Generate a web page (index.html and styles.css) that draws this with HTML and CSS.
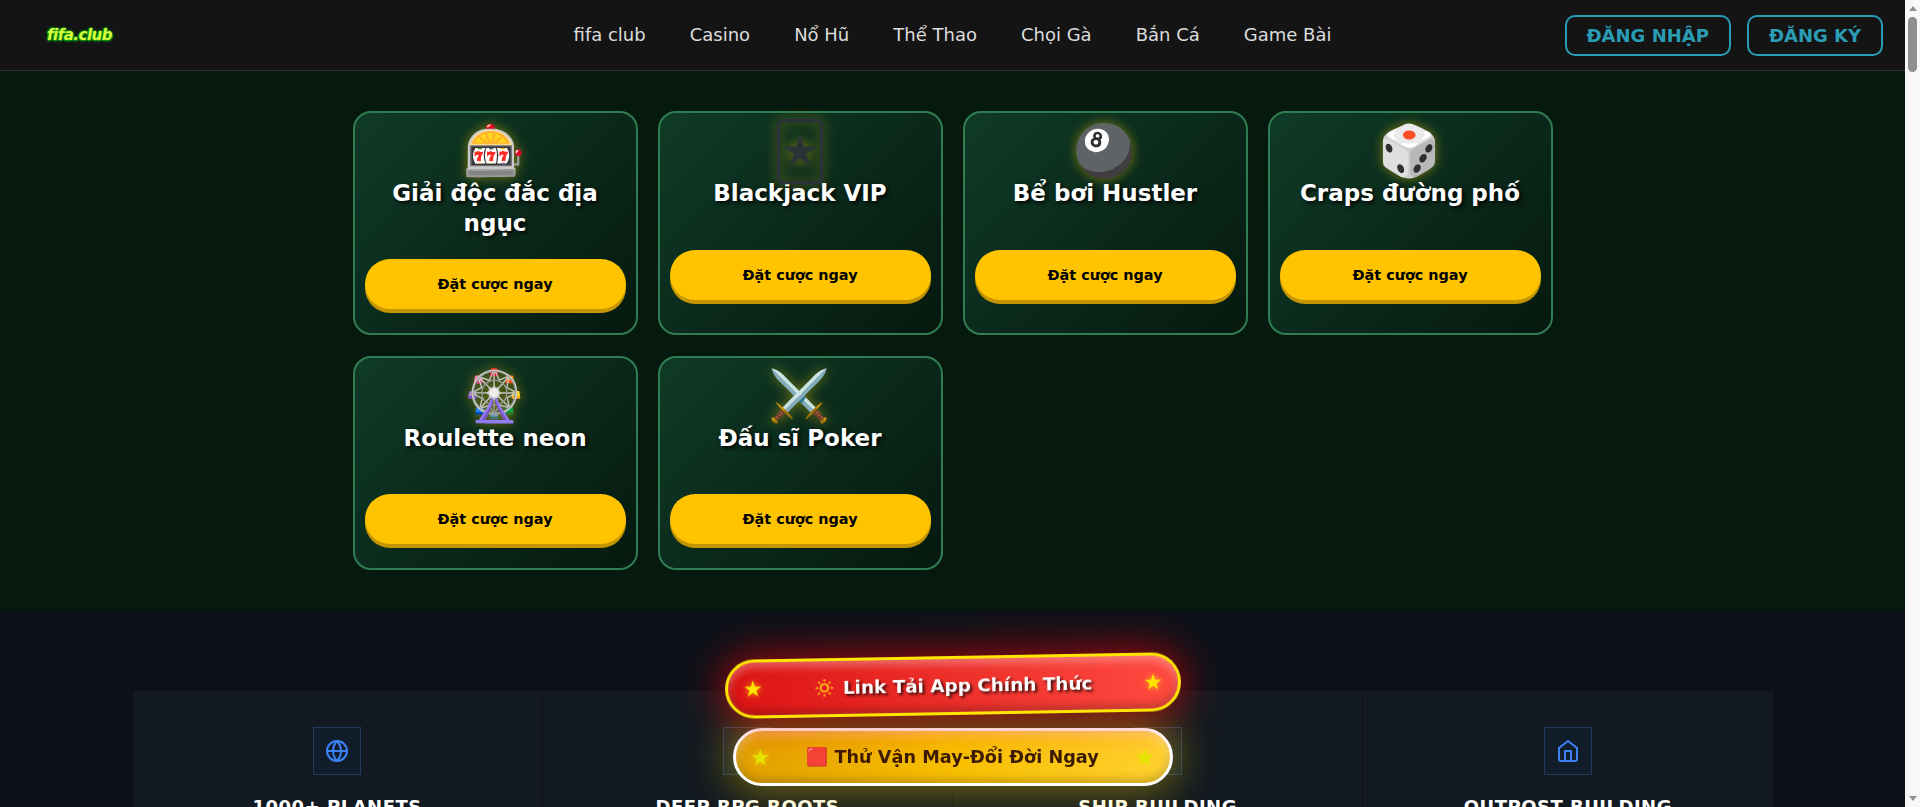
FILE: index.html
```html
<!DOCTYPE html>
<html lang="vi">
<head>
<meta charset="utf-8">
<title>fifa club</title>
<link rel="stylesheet" href="styles.css">
</head>
<body>
<header class="topbar">
  <a class="logo" href="#">fifa.club</a>
  <nav class="nav">
    <a href="#">fifa club</a><a href="#">Casino</a><a href="#">Nổ Hũ</a><a href="#">Thể Thao</a><a href="#">Chọi Gà</a><a href="#">Bắn Cá</a><a href="#">Game Bài</a>
  </nav>
  <div class="auth">
    <a class="auth-btn" href="#">ĐĂNG NHẬP</a>
    <a class="auth-btn" href="#">ĐĂNG KÝ</a>
  </div>
</header>

<section class="games">
  <div class="game-grid">
    <article class="card"><div class="card-icon">🎰</div><h3 class="card-title">Giải độc đắc địa ngục</h3><a class="bet" href="#">Đặt cược ngay</a></article>
    <article class="card"><div class="card-icon card-icon-glyph">🃏</div><h3 class="card-title">Blackjack VIP</h3><a class="bet" href="#">Đặt cược ngay</a></article>
    <article class="card"><div class="card-icon">🎱</div><h3 class="card-title">Bể bơi Hustler</h3><a class="bet" href="#">Đặt cược ngay</a></article>
    <article class="card"><div class="card-icon">🎲</div><h3 class="card-title">Craps đường phố</h3><a class="bet" href="#">Đặt cược ngay</a></article>
    <article class="card"><div class="card-icon">🎡</div><h3 class="card-title">Roulette neon</h3><a class="bet" href="#">Đặt cược ngay</a></article>
    <article class="card"><div class="card-icon">⚔️</div><h3 class="card-title">Đấu sĩ Poker</h3><a class="bet" href="#">Đặt cược ngay</a></article>
  </div>
</section>

<section class="features">
  <div class="feature-grid">
    <div class="feature">
      <div class="feature-icon"><svg viewBox="0 0 24 24"><circle cx="12" cy="12" r="10"/><path d="M2 12h20"/><path d="M12 2a15.3 15.3 0 0 1 4 10 15.3 15.3 0 0 1-4 10 15.3 15.3 0 0 1-4-10 15.3 15.3 0 0 1 4-10z"/></svg></div>
      <h4 class="feature-title">1000+ PLANETS</h4>
    </div>
    <div class="feature">
      <div class="feature-icon"><svg viewBox="0 0 24 24"><path d="M4 19.5A2.5 2.5 0 0 1 6.5 17H20V2H6.500A2.500 2.500 0 0 0 4 4.500z"/></svg></div>
      <h4 class="feature-title">DEEP RPG ROOTS</h4>
    </div>
    <div class="feature">
      <div class="feature-icon"><svg viewBox="0 0 24 24"><path d="M12 2l4 8v8H8v-8z"/></svg></div>
      <h4 class="feature-title">SHIP BUILDING</h4>
    </div>
    <div class="feature">
      <div class="feature-icon"><svg viewBox="0 0 24 24"><path d="M3 9l9-7 9 7v11a2 2 0 0 1-2 2H5a2 2 0 0 1-2-2z"/><path d="M9 22V12h6v10"/></svg></div>
      <h4 class="feature-title">OUTPOST BUILDING</h4>
    </div>
  </div>
</section>

<div class="float-cta">
  <a class="cta cta-red" href="#"><span class="star">★</span><span class="cta-text"><span class="cta-emoji">🔅</span> Link Tải App Chính Thức</span><span class="star">★</span></a>
  <a class="cta cta-gold" href="#"><span class="star">★</span><span class="cta-text"><span class="cta-emoji">🟥</span> Thử Vận May-Đổi Đời Ngay</span><span class="star">★</span></a>
</div>

<aside class="scrollbar" aria-hidden="true">
  <span class="arrow arrow-up"></span>
  <span class="track"><span class="thumb"></span></span>
  <span class="arrow arrow-down"></span>
</aside>
</body>
</html>
```

FILE: styles.css
```css
* { box-sizing: border-box; }
html, body { margin: 0; padding: 0; }
html { overflow: hidden; height: 100%; background: #0c1018; }
body {
  width: 1905px;
  height: 100%;
  overflow: hidden;
  font-family: "DejaVu Sans", "Noto Color Emoji", sans-serif;
  background: #0c1018;
  color: #fff;
}
a { text-decoration: none; color: inherit; }

.topbar {
  display: grid;
  grid-template-columns: 1fr auto 1fr;
  align-items: center;
  height: 71px;
  padding: 0 22px;
  background: #141414;
  border-bottom: 1px solid #2c2f2c;
}
.logo {
  justify-self: start;
  margin-left: 25px;
  font-size: 15px;
  font-weight: 700;
  font-style: italic;
  letter-spacing: -0.5px;
  color: #d8ff3a;
  text-shadow: 1px 1px 0 #0a8a12, -1px 0 0 #0a8a12, 0 -1px 0 #0a6a12, 0 1px 2px #13c41c, 0 0 3px #0ca014;
}
.nav { display: flex; gap: 44px; margin-bottom: 2px; font-size: 18px; color: #dcdcdc; }
.auth { justify-self: end; display: flex; gap: 16px; }
.auth-btn {
  display: flex;
  align-items: center;
  height: 41px;
  padding: 0 20px;
  border: 2px solid #2a9db5;
  border-radius: 10px;
  color: #2a9db5;
  font-size: 18px;
  font-weight: 700;
}

.games {
  padding: 40px 0 41px;
  background: #05190f;
}
.game-grid {
  display: grid;
  grid-template-columns: repeat(4, 1fr);
  gap: 20.6px 20px;
  width: 1200px;
  margin: 0 auto;
}
.card {
  display: flex;
  flex-direction: column;
  padding: 10px 10px 24px;
  border: 2px solid #2f7d50;
  border-radius: 18px;
  background: linear-gradient(135deg, #0f3b27 0%, #06190f 100%);
  text-align: center;
}
.card-icon {
  height: 55px;
  font-size: 50px;
  line-height: 57px;
  filter: drop-shadow(0 0 6px rgba(255, 215, 0, .45));
}
.card-icon-glyph { color: #2b3238; font-size: 56px; }
.card-title {
  min-height: 50.5px;
  margin: 0 0 21px;
  font-size: 23px;
  line-height: 30px;
  font-weight: 700;
  text-shadow: 2px 2px 4px #000;
}
.bet {
  display: flex;
  align-items: center;
  justify-content: center;
  height: 50px;
  border-radius: 25px;
  background: #ffc300;
  color: #000;
  font-size: 14.4px;
  font-weight: 700;
  box-shadow: 0 4px 0 #c49500;
}

.features { padding: 80px 0 80px; background: #0c1018; }
.feature-grid {
  display: grid;
  grid-template-columns: repeat(4, 1fr);
  gap: 1px;
  width: 1640px;
  margin: 0 auto;
  background: #0d1117;
}
.feature {
  display: flex;
  flex-direction: column;
  align-items: center;
  height: 300px;
  padding-top: 36px;
  background: #121920;
}
.feature-icon {
  display: flex;
  align-items: center;
  justify-content: center;
  width: 48px;
  height: 48px;
  border: 1px solid #223a5c;
  background: #121d2c;
}
.feature-icon svg {
  width: 24px;
  height: 24px;
  fill: none;
  stroke: #3b82f6;
  stroke-width: 2;
  stroke-linecap: round;
  stroke-linejoin: round;
}
.feature-title {
  margin: 20px 0 0;
  font-size: 18px;
  line-height: 24px;
  font-weight: 700;
  letter-spacing: .5px;
}

.float-cta {
  position: fixed;
  left: 0;
  top: 653px;
  width: 1905px;
  display: flex;
  flex-direction: column;
  align-items: center;
  gap: 13px;
}
.cta {
  display: flex;
  align-items: center;
  justify-content: space-between;
  border-radius: 30px;
  font-weight: 700;
}
.cta-red {
  width: 456px;
  height: 59px;
  padding: 0 15px;
  margin-top: 3px;
  transform: rotate(-1deg);
  border: 3px solid #ffe600;
  background: linear-gradient(90deg, #dc1414, #ff4a40);
  box-shadow: 0 0 40px 4px rgba(255, 0, 0, .6), inset 0 5px 8px rgba(255, 255, 255, .32), inset 0 -4px 8px rgba(0, 0, 0, .25);
  color: #fff;
  font-size: 18.4px;
  text-shadow: 2px 2px 3px rgba(0, 0, 0, .8);
}
.cta-gold {
  width: 440px;
  height: 58px;
  padding: 0 15px;
  border: 3px solid #fff;
  background: linear-gradient(90deg, #e0a000, #f8c000 50%, #ffd030);
  box-shadow: 0 0 40px 6px rgba(255, 215, 0, .42), inset 0 5px 8px rgba(255, 255, 255, .32), inset 0 -4px 8px rgba(0, 0, 0, .2);
  color: #3a1a00;
  font-size: 17.7px;
}
.star { color: #ffe600; font-size: 22px; text-shadow: 0 0 6px rgba(255, 230, 0, .7); }
.cta-gold .star { color: #e2e800; }
.cta-text { white-space: nowrap; }
.cta-emoji { text-shadow: none; }

.scrollbar {
  position: fixed;
  top: 0;
  right: 0;
  width: 15px;
  height: 100vh;
  display: flex;
  flex-direction: column;
  background: #f8f8f8;
}
.arrow { flex: 0 0 17px; display: flex; align-items: center; justify-content: center; }
.arrow::before {
  content: "";
  border-left: 4px solid transparent;
  border-right: 4px solid transparent;
}
.arrow-up::before { border-bottom: 5px solid #8f8f8f; }
.arrow-down::before { border-top: 5px solid #8f8f8f; }
.track { flex: 1; }
.thumb {
  display: block;
  width: 9px;
  height: 55px;
  margin-left: 3px;
  border-radius: 5px;
  background: #8f8f8f;
}
```
